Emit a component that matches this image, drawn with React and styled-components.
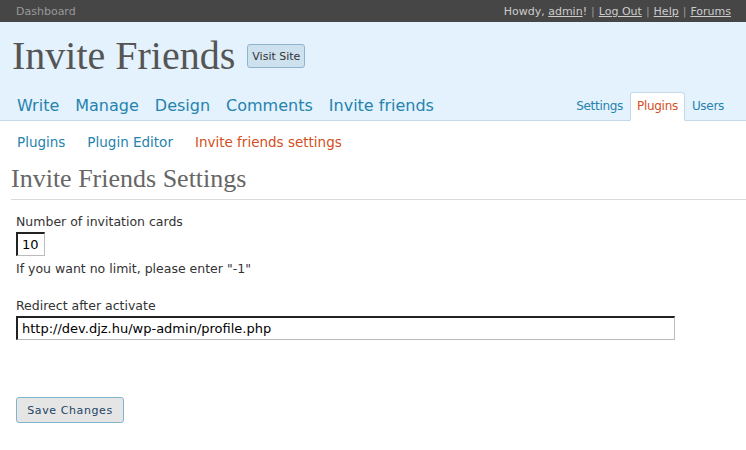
import React from "react";
import styled, {createGlobalStyle} from "styled-components";

const GlobalStyle = createGlobalStyle`
    html, body {
        margin: 0;
        padding: 0;
        background: #fff;
        font-family: "DejaVu Sans", "Liberation Sans", sans-serif;
        color: #333;
    }
`;

const TopBar = styled.div`
    height: 22px;
    background: #464646;
    display: flex;
    align-items: center;
    justify-content: space-between;
    padding: 0 15px 0 16px;
    font-size: 11px;
    color: #999;
    .user {
        color: #ccc;
        a {
            color: #ccc;
            text-decoration: underline;
        }
        .sep {
            color: #999;
            margin: 0 4px;
        }
    }
`;

const Head = styled.div`
    background: #e4f2fd;
    border-bottom: 1px solid #c6d9e9;
    height: 98px;
    display: flex;
    flex-direction: column;
    justify-content: space-between;
`;

const TitleRow = styled.div`
    display: flex;
    align-items: center;
    gap: 12px;
    padding: 14px 0 0 12px;
    h1 {
        margin: 0;
        font-family: "Liberation Serif", serif;
        font-weight: normal;
        font-size: 40px;
        line-height: 40px;
        color: #555;
    }
`;

const VisitButton = styled.span`
    display: inline-block;
    margin-top: 0;
    padding: 5px 4px 4px;
    font-size: 11px;
    color: #333;
    background: #cee1ef;
    border: 1px solid #8fb3ce;
    border-radius: 3px;
`;

const NavRow = styled.div`
    display: flex;
    justify-content: space-between;
    align-items: flex-end;
    padding: 0 15px 0 17px;
`;

const MainMenu = styled.div`
    display: flex;
    gap: 16px;
    padding-bottom: 5px;
    a {
        font-size: 16px;
        color: #2583ad;
        text-decoration: none;
    }
`;

const SideMenu = styled.div`
    display: flex;
    margin-bottom: -1px;
`;

const Tab = styled.a`
    font-size: 12px;
    letter-spacing: -0.3px;
    text-decoration: none;
    padding: 6px 6px 7px;
    color: ${p => (p.$active ? "#d54e21" : "#2583ad")};
    background: ${p => (p.$active ? "#fff" : "transparent")};
    border: 1px solid ${p => (p.$active ? "#c6d9e9" : "transparent")};
    border-bottom-color: ${p => (p.$active ? "#fff" : "transparent")};
    border-radius: 3px 3px 0 0;
`;

const SubMenu = styled.div`
    display: flex;
    gap: 22px;
    padding: 13px 0 0 17px;
    a {
        font-size: 13.5px;
        color: #2583ad;
        text-decoration: none;
    }
    a.current {
        color: #d54e21;
    }
`;

const Wrap = styled.div`
    padding-left: 11px;
`;

const PageTitle = styled.h2`
    margin: 14px 0 0;
    padding-bottom: 5px;
    font-family: "Liberation Serif", serif;
    font-weight: normal;
    font-size: 26px;
    line-height: 30px;
    color: #666;
    border-bottom: 1px solid #dadada;
`;

const Form = styled.form`
    padding: 14px 0 0 5px;
    font-size: 12.5px;
    color: #333;
`;

const Field = styled.div`
    margin-bottom: 22px;
    label {
        display: block;
        margin-bottom: 3px;
    }
    p {
        margin: 5px 0 0;
    }
`;

const Input = styled.input`
    box-sizing: border-box;
    width: ${p => p.$width}px;
    height: 24px;
    padding: 2px 4px;
    font-family: "DejaVu Sans", sans-serif;
    font-size: 13px;
    color: #000;
    border-style: solid;
    border-width: 2px 1px 1px 2px;
    border-color: #222 #bbb #bbb #222;
    outline: none;
`;

const SaveButton = styled.button`
    margin-top: 35px;
    height: 26px;
    width: 108px;
    font-family: "DejaVu Sans", sans-serif;
    font-size: 11px;
    letter-spacing: 0.6px;
    color: #246;
    background: #e5e5e5;
    border: 1px solid #80b5d0;
    border-radius: 3px;
`;

const App = () => {
    return (
        <>
            <GlobalStyle/>
            <TopBar>
                <span>Dashboard</span>
                <span className={"user"}>
                    Howdy, <a>admin</a>!<span className={"sep"}>|</span><a>Log Out</a>
                    <span className={"sep"}>|</span><a>Help</a>
                    <span className={"sep"}>|</span><a>Forums</a>
                </span>
            </TopBar>
            <Head>
                <TitleRow>
                    <h1>Invite Friends</h1>
                    <VisitButton>Visit Site</VisitButton>
                </TitleRow>
                <NavRow>
                    <MainMenu>
                        <a>Write</a>
                        <a>Manage</a>
                        <a>Design</a>
                        <a>Comments</a>
                        <a>Invite friends</a>
                    </MainMenu>
                    <SideMenu>
                        <Tab>Settings</Tab>
                        <Tab $active>Plugins</Tab>
                        <Tab>Users</Tab>
                    </SideMenu>
                </NavRow>
            </Head>
            <SubMenu>
                <a>Plugins</a>
                <a>Plugin Editor</a>
                <a className={"current"}>Invite friends settings</a>
            </SubMenu>
            <Wrap>
                <PageTitle>Invite Friends Settings</PageTitle>
                <Form onSubmit={e => e.preventDefault()}>
                    <Field>
                        <label>Number of invitation cards</label>
                        <Input $width={29} defaultValue={"10"}/>
                        <p>If you want no limit, please enter "-1"</p>
                    </Field>
                    <Field>
                        <label>Redirect after activate</label>
                        <Input $width={659} defaultValue={"http://dev.djz.hu/wp-admin/profile.php"}/>
                    </Field>
                    <SaveButton>Save Changes</SaveButton>
                </Form>
            </Wrap>
        </>
    );
};

export default App;
